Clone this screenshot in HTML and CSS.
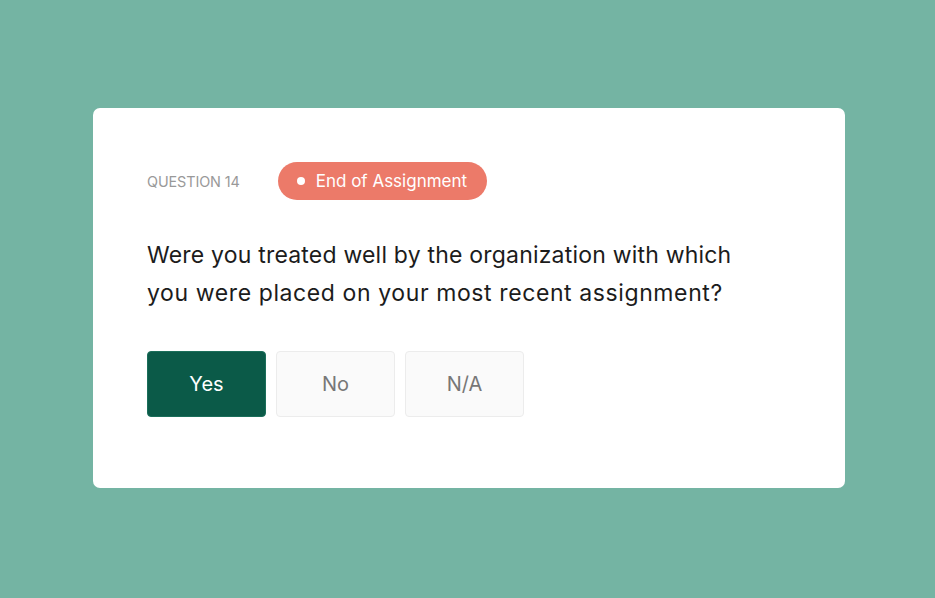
FILE: index.html
```html
<!DOCTYPE html>
<html>
<head>
<meta charset="utf-8">
<link rel="stylesheet" href="styles.css">
</head>
<body>
<div class="card">
  <div class="meta">
    <span class="qnum">QUESTION 14</span>
    <span class="pill"><span class="dot"></span>End of Assignment</span>
  </div>
  <p class="question"><span class="line">Were you treated well by the organization with which</span><br><span class="line line-wide">you were placed on your most recent assignment?</span></p>
  <div class="options">
    <button class="opt opt-active">Yes</button>
    <button class="opt">No</button>
    <button class="opt">N/A</button>
  </div>
</div>
</body>
</html>
```

FILE: styles.css
```css
html, body {
  margin: 0;
  padding: 0;
}
body {
  width: 935px;
  height: 598px;
  background: #74b4a3;
  font-family: Inter, "Noto Sans", sans-serif;
  display: flex;
  flex-direction: column;
  align-items: flex-start;
  padding: 108px 0 0 93px;
  box-sizing: border-box;
}
.card {
  width: 752px;
  height: 380px;
  box-sizing: border-box;
  background: #fff;
  border-radius: 7px;
  padding: 54px 54px 0 54px;
}
.meta {
  display: flex;
  align-items: center;
  gap: 38px;
  height: 38px;
}
.qnum {
  font-size: 14.4px;
  color: #999;
  letter-spacing: -0.1px;
}
.pill {
  display: flex;
  align-items: center;
  height: 38px;
  box-sizing: border-box;
  padding: 0 20px 0 19px;
  border-radius: 19px;
  background: #ec7a69;
  color: #fff;
  font-size: 17px;
  letter-spacing: 0;
}
.dot {
  width: 8px;
  height: 8px;
  border-radius: 50%;
  background: #fff;
  margin-right: 11px;
}
.question {
  margin: 36px 0 0 0;
  font-size: 23px;
  line-height: 38px;
  color: #1c1c1c;
  letter-spacing: 0.2px;
}
.line-wide {
  letter-spacing: 0.6px;
}
.options {
  display: flex;
  gap: 10px;
  margin-top: 39px;
}
.opt {
  width: 119px;
  height: 66px;
  box-sizing: border-box;
  border: 1px solid #ececec;
  background: #fafafa;
  border-radius: 4px;
  font-family: Inter, "Noto Sans", sans-serif;
  font-size: 20px;
  color: #777;
  padding: 0;
}
.opt-active {
  background: #0b5a48;
  border-color: #1b6e5a;
  color: #fff;
}
```
